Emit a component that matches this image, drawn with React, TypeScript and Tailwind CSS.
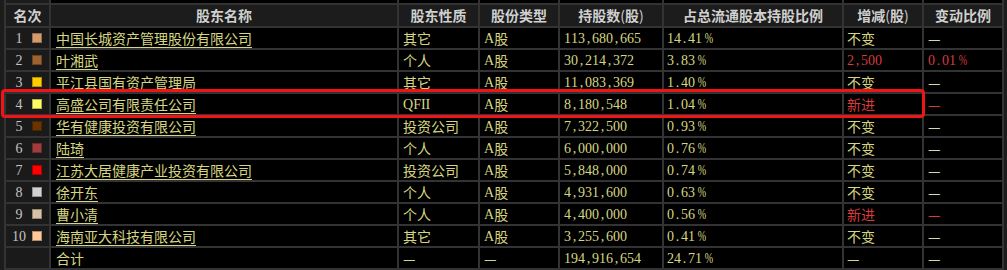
import React from "react";

type Row = {
  r: number;
  c: string;
  name: string;
  type: string;
  shares: string;
  pct: string;
  chg: string;
  chgRed: boolean;
  ratio: string;
  ratioRed: boolean;
};

const rows: Row[] = [
  { r: 1, c: "#d49c6c", name: "中国长城资产管理股份有限公司", type: "其它", shares: "113,680,665", pct: "14.41%", chg: "不变", chgRed: false, ratio: "—", ratioRed: false },
  { r: 2, c: "#9c6230", name: "叶湘武", type: "个人", shares: "30,214,372", pct: "3.83%", chg: "2,500", chgRed: true, ratio: "0.01%", ratioRed: true },
  { r: 3, c: "#ffcc00", name: "平江县国有资产管理局", type: "其它", shares: "11,083,369", pct: "1.40%", chg: "不变", chgRed: false, ratio: "—", ratioRed: false },
  { r: 4, c: "#ffff66", name: "高盛公司有限责任公司", type: "QFII", shares: "8,180,548", pct: "1.04%", chg: "新进", chgRed: true, ratio: "—", ratioRed: true },
  { r: 5, c: "#6b3300", name: "华有健康投资有限公司", type: "投资公司", shares: "7,322,500", pct: "0.93%", chg: "不变", chgRed: false, ratio: "—", ratioRed: false },
  { r: 6, c: "#a03c3c", name: "陆琦", type: "个人", shares: "6,000,000", pct: "0.76%", chg: "不变", chgRed: false, ratio: "—", ratioRed: false },
  { r: 7, c: "#ff0000", name: "江苏大居健康产业投资有限公司", type: "投资公司", shares: "5,848,000", pct: "0.74%", chg: "不变", chgRed: false, ratio: "—", ratioRed: false },
  { r: 8, c: "#d2d2d2", name: "徐开东", type: "个人", shares: "4,931,600", pct: "0.63%", chg: "不变", chgRed: false, ratio: "—", ratioRed: false },
  { r: 9, c: "#d6c2a6", name: "曹小清", type: "个人", shares: "4,400,000", pct: "0.56%", chg: "新进", chgRed: true, ratio: "—", ratioRed: true },
  { r: 10, c: "#ffc898", name: "海南亚大科技有限公司", type: "其它", shares: "3,255,600", pct: "0.41%", chg: "不变", chgRed: false, ratio: "—", ratioRed: false },
];

const CJK = "font-['Noto_Sans_CJK_SC',sans-serif]";
const SERIF = "font-['Liberation_Serif','Noto_Sans_CJK_SC',serif]";

function Mono({ text }: { text: string }) {
  const fixed = (ch: string) => /[0-9.,%]/.test(ch);
  const ascii = (ch: string) => ch.charCodeAt(0) < 128;
  return (
    <span className="inline-flex items-center">
      {Array.from(text).map((ch, i) =>
        fixed(ch) ? (
          <span key={i} className={`inline-block w-[7px] text-center ${SERIF}`}>
            {ch === "%" ? <span className="inline-block scale-x-[0.72] translate-x-[1px]">%</span> : ch}
          </span>
        ) : ascii(ch) ? (
          <span key={i} className={`inline-block ${SERIF}`}>
            {ch}
          </span>
        ) : (
          <span key={i} className={CJK}>
            {ch}
          </span>
        )
      )}
    </span>
  );
}

const YEL = "text-[#d6d682]";
const RED = "text-[#d63c3c]";
const HEAD = "bg-[#1c1c1c] flex items-center justify-center text-[#d0d0d0] font-bold text-[14px] " + CJK;
const BODY = "bg-black flex items-center text-[14px] whitespace-nowrap overflow-hidden";

export default function App() {
  const heads = ["名次", "股东名称", "股东性质", "股份类型", "持股数(股)", "占总流通股本持股比例", "增减(股)", "变动比例"];
  return (
    <div className="w-[1007px] h-[270px] bg-[#1c1c1c] relative overflow-hidden">
      <div className="ml-[4px] w-[1000px] bg-[#333333] grid grid-cols-[43px_346px_79px_78px_102px_178px_78px_78px] grid-rows-[3px_21px_repeat(11,20px)] gap-[2px] px-[2px] pb-[2px]">
        {heads.map((_, i) => (
          <div key={"s" + i} className={i === 0 ? "bg-[#1c1c1c]" : "bg-black"} />
        ))}
        {heads.map((h, i) => (
          <div key={"h" + i} className={HEAD}>
            {h === "持股数(股)" ? (
              <span>持股数<span className="font-normal">(</span>股<span className="font-normal">)</span></span>
            ) : h === "增减(股)" ? (
              <span>增减<span className="font-normal">(</span>股<span className="font-normal">)</span></span>
            ) : (
              h
            )}
          </div>
        ))}
        {rows.map((row) => (
          <React.Fragment key={row.r}>
            <div className="bg-[#1a1a1a] flex items-center">
              <span className={`w-[26px] text-center text-[14px] text-[#c4c4c4] ${SERIF}`}>{row.r}</span>
              <span className="w-[10px] h-[10px] border border-black/30" style={{ backgroundColor: row.c }} />
            </div>
            <div className={`${BODY} pl-[5px] ${YEL} ${CJK}`}>
              <span className="underline underline-offset-[3px] decoration-1">{row.name}</span>
            </div>
            <div className={`${BODY} pl-[4px] ${YEL} ${CJK}`}>
              <Mono text={row.type} />
            </div>
            <div className={`${BODY} pl-[4px] ${YEL}`}>
              <span className={`inline-block ${SERIF}`}>A</span>
              <span className={CJK}>股</span>
            </div>
            <div className={`${BODY} pl-[4px] ${YEL}`}>
              <Mono text={row.shares} />
            </div>
            <div className={`${BODY} pl-[3px] ${YEL}`}>
              <Mono text={row.pct} />
            </div>
            <div className={`${BODY} pl-[3px] ${row.chgRed ? RED : YEL} ${CJK}`}>
              <Mono text={row.chg} />
            </div>
            <div className={`${BODY} pl-[4px] ${row.ratioRed ? RED : "text-[#d8d8b0]"} ${CJK}`}>
              <Mono text={row.ratio} />
            </div>
          </React.Fragment>
        ))}
        <div className="bg-[#1a1a1a]" />
        <div className={`${BODY} pl-[5px] ${YEL} ${CJK}`}>合计</div>
        <div className={`${BODY} pl-[4px] ${YEL} ${CJK}`}>—</div>
        <div className={`${BODY} pl-[4px] ${YEL} ${CJK}`}>—</div>
        <div className={`${BODY} pl-[4px] ${YEL}`}>
          <Mono text="194,916,654" />
        </div>
        <div className={`${BODY} pl-[3px] ${YEL}`}>
          <Mono text="24.71%" />
        </div>
        <div className={`${BODY} pl-[3px] ${YEL} ${CJK}`}>—</div>
        <div className={`${BODY} pl-[4px] text-[#d8d8b0] ${CJK}`}>—</div>
      </div>
      <div className="absolute left-[1px] top-[89px] w-[924px] h-[29px] border-[3px] border-[#f01414] rounded-[4px] pointer-events-none" />
    </div>
  );
}
